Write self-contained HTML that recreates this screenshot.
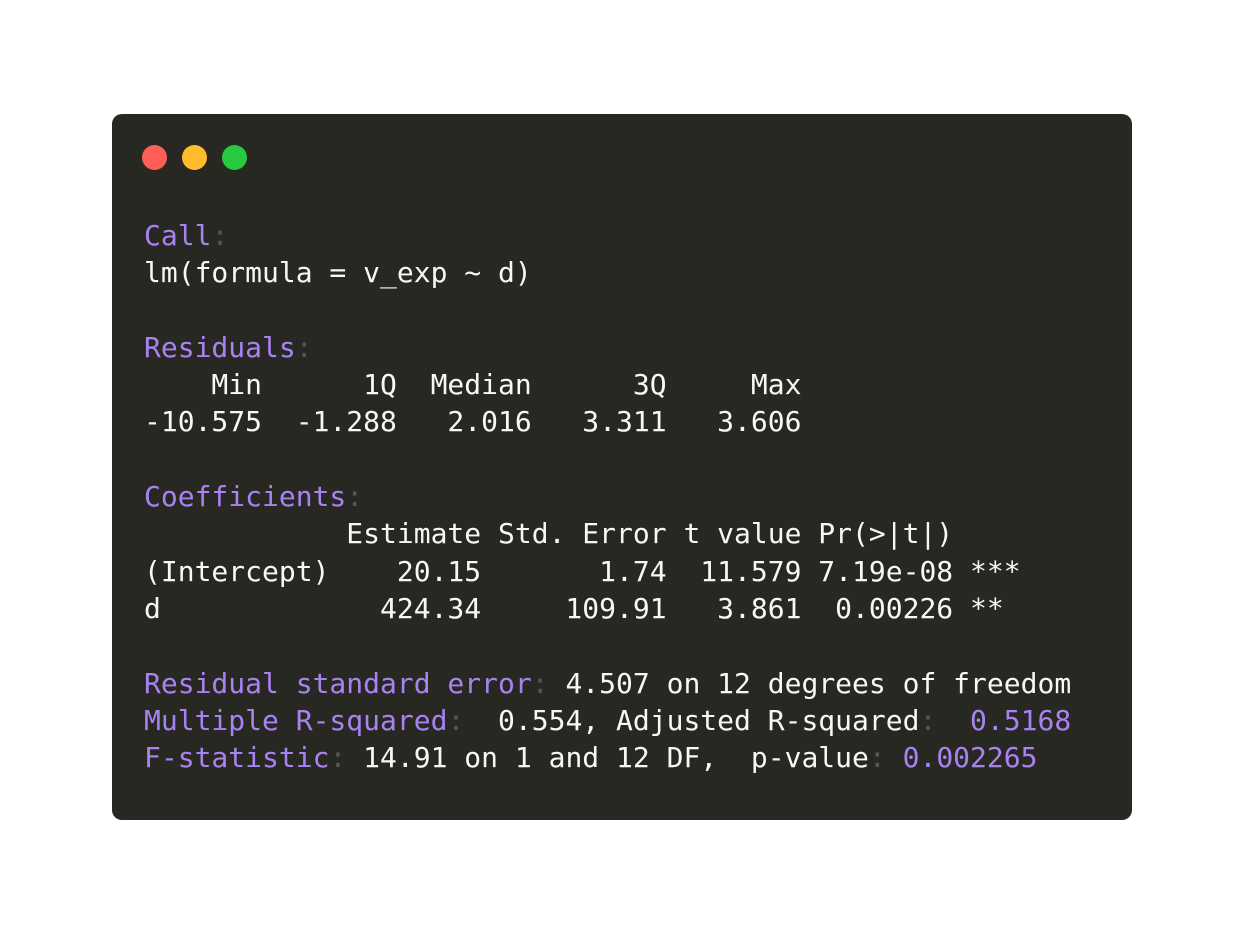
<!DOCTYPE html>
<html><head><style>
html,body{margin:0;padding:0;background:#fff;width:1244px;height:932px;overflow:hidden}
.win{position:absolute;left:112px;top:114px;width:1020px;height:706px;background:#282823;border-radius:10px}
.d{position:absolute;top:145px;width:25px;height:25px;border-radius:50%}
pre{position:absolute;left:144px;top:217px;margin:0;font-family:"DejaVu Sans Mono","Liberation Mono",monospace;font-size:28px;line-height:37.3px;color:#f8f8f2;white-space:pre}
.p{color:#a982f2}.c{color:#555}
</style></head><body>
<div class="win"></div>
<div class="d" style="left:142px;background:#ff5f56"></div>
<div class="d" style="left:182px;background:#ffbd2e"></div>
<div class="d" style="left:222px;background:#27c93f"></div>
<pre><span class="p">Call</span><span class="c">:</span>
lm(formula = v_exp ~ d)

<span class="p">Residuals</span><span class="c">:</span>
    Min      1Q  Median      3Q     Max 
-10.575  -1.288   2.016   3.311   3.606 

<span class="p">Coefficients</span><span class="c">:</span>
            Estimate Std. Error t value Pr(>|t|)    
(Intercept)    20.15       1.74  11.579 7.19e-08 ***
d             424.34     109.91   3.861  0.00226 ** 

<span class="p">Residual standard error</span><span class="c">:</span> 4.507 on 12 degrees of freedom
<span class="p">Multiple R-squared</span><span class="c">:</span>  0.554, Adjusted R-squared<span class="c">:</span>  <span class="p">0.5168</span> 
<span class="p">F-statistic</span><span class="c">:</span> 14.91 on 1 and 12 DF,  p-value<span class="c">:</span> <span class="p">0.002265</span></pre>
</body></html>
